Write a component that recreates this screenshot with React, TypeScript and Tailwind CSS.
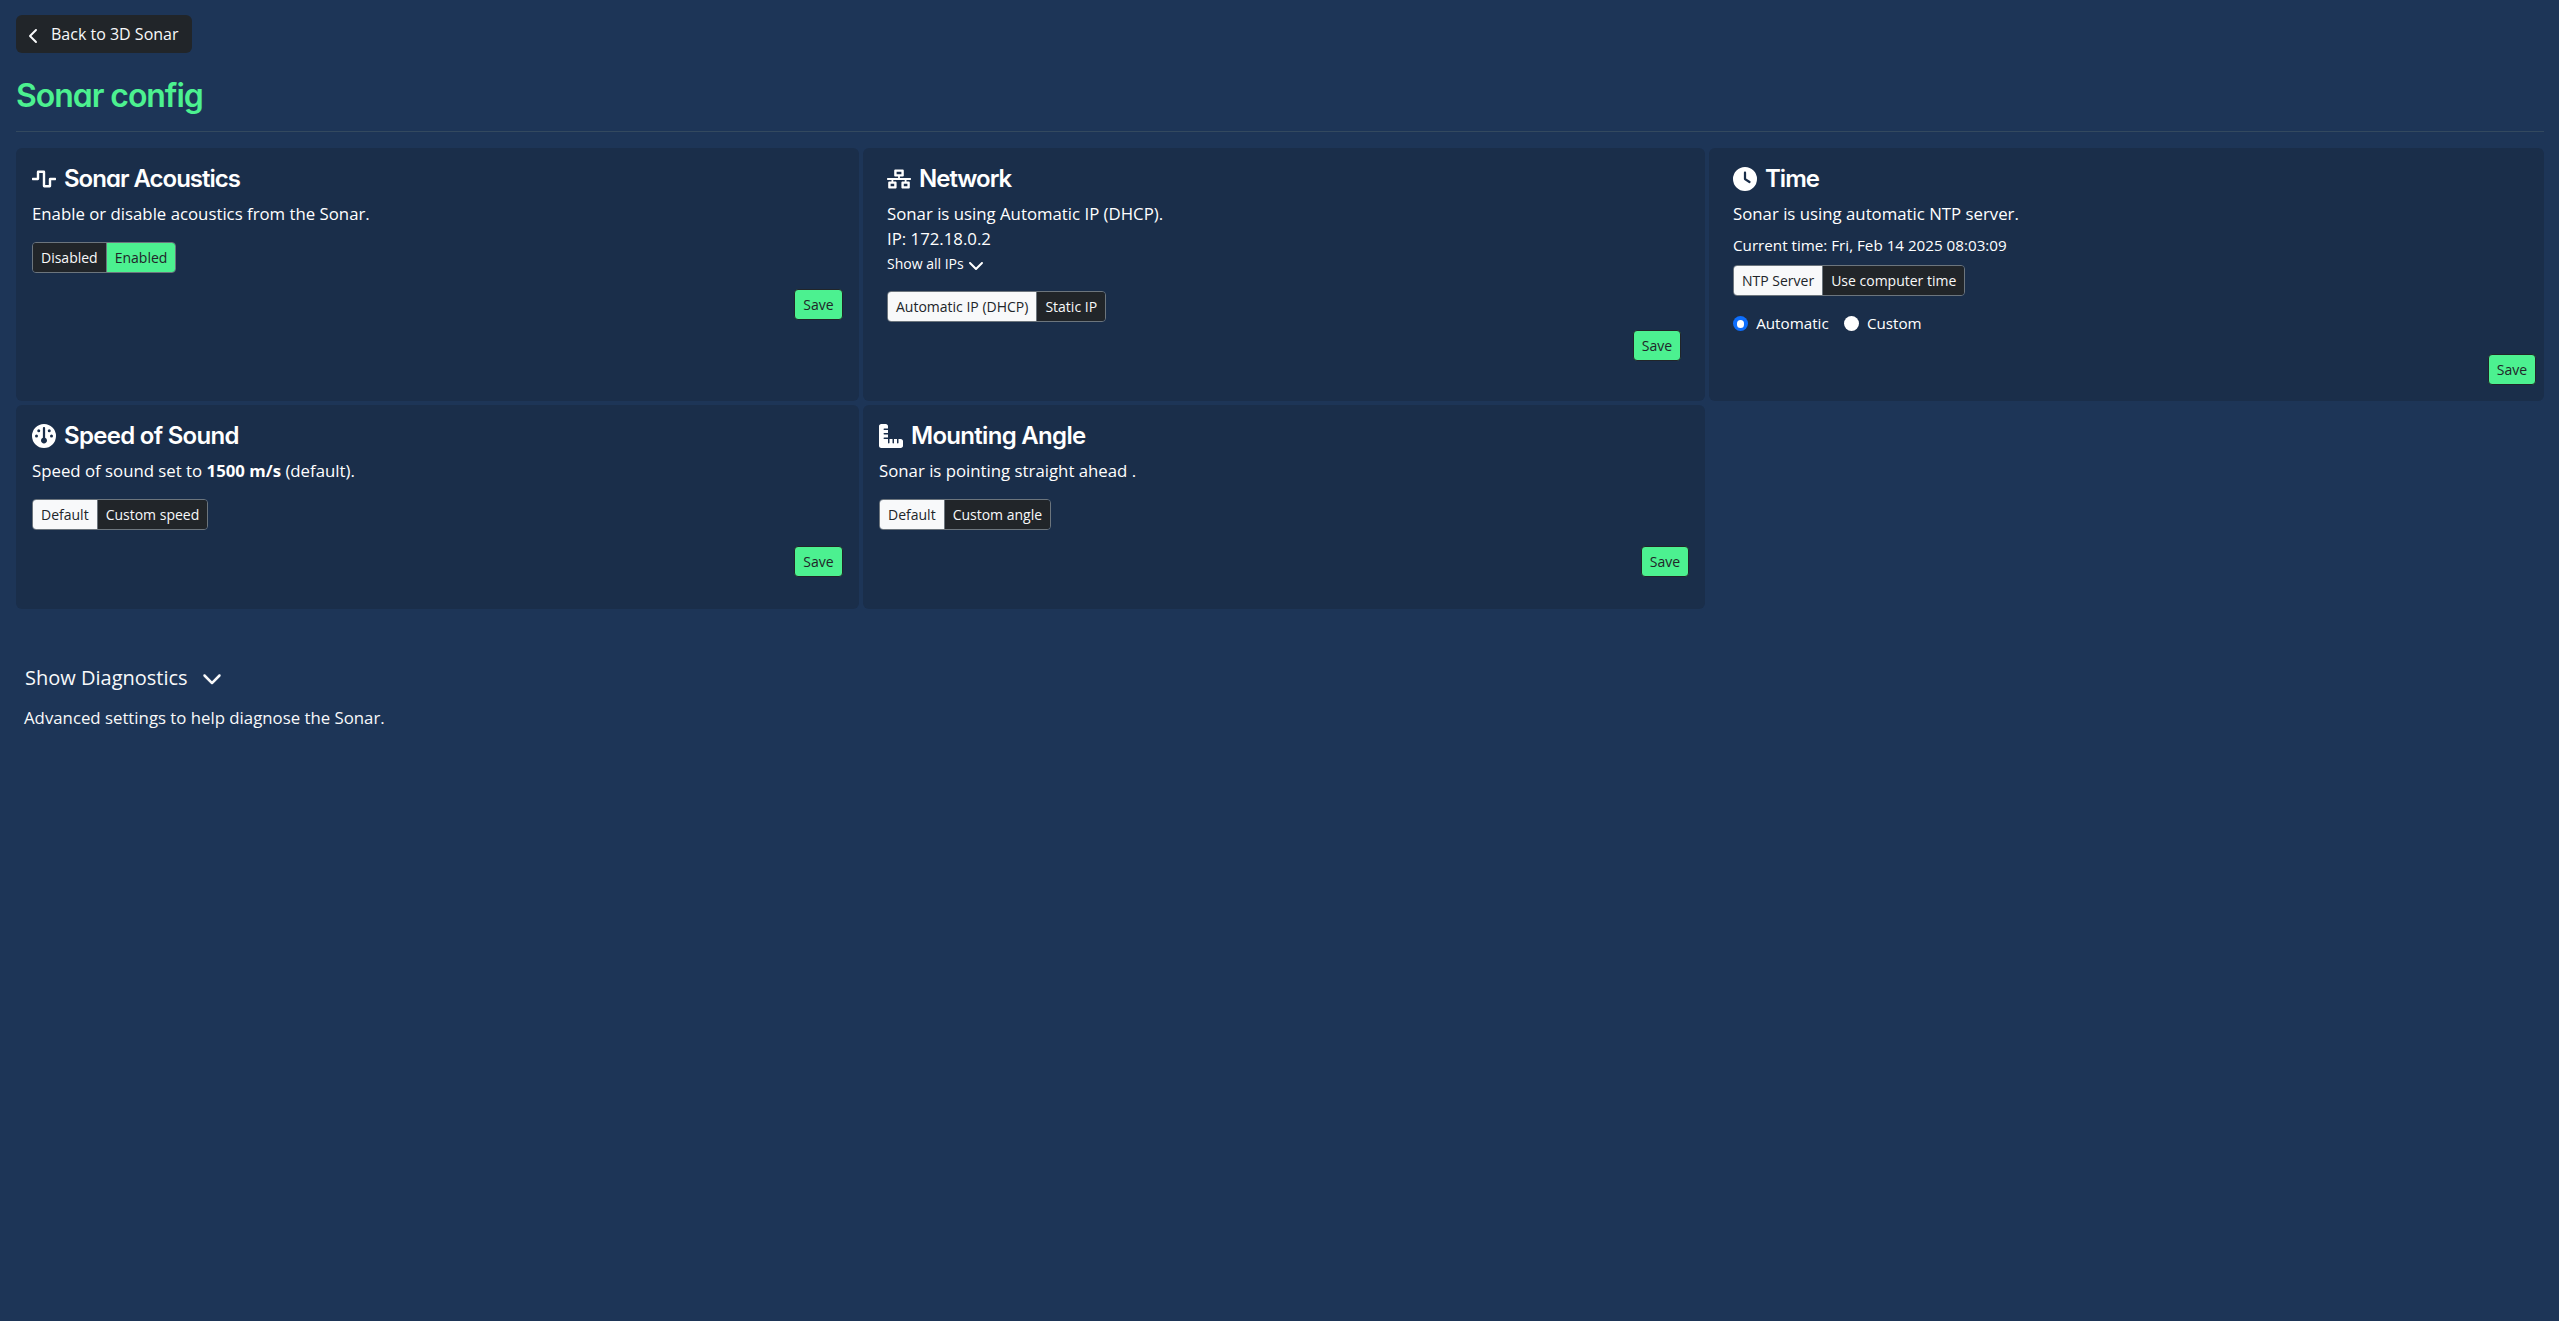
import React, { type ReactNode } from "react";
import { FaNetworkWired, FaWaveSquare } from "react-icons/fa";
import { FaChevronDown, FaChevronLeft, FaClock, FaGauge, FaRulerCombined } from "react-icons/fa6";

type CardProps = {
  icon: ReactNode;
  title: string;
  tracking?: string;
  className: string;
  children: ReactNode;
};

function Card({ icon, title, tracking = "tracking-[-1px]", className, children }: CardProps) {
  return (
    <section className={`flex flex-col items-start rounded-md bg-[#1a2e4a] pt-4 ${className}`}>
      <h2
        className={`mb-2 flex h-[29px] items-center gap-2 font-[Inter,sans-serif] text-2xl leading-[29px] font-semibold [font-feature-settings:'cv11'] ${tracking}`}
      >
        {icon}
        {title}
      </h2>
      {children}
    </section>
  );
}

type ToggleProps = { options: [string, string]; active: number; accent?: boolean };

function Toggle({ options, active, accent = false }: ToggleProps) {
  const on = accent ? "bg-[#4cf190] text-[#212529]" : "bg-[#f8f9fa] text-[#212529]";
  const off = "bg-[#212529] text-[#f8f9fa]";
  return (
    <div className="flex h-[31px] overflow-hidden rounded border border-[#6c757d] text-sm leading-[21px]">
      {options.map((label, i) => (
        <button
          key={label}
          className={`px-2 py-1 whitespace-nowrap ${i === 1 ? "border-l border-[#6c757d]" : ""} ${i === active ? on : off}`}
        >
          {label}
        </button>
      ))}
    </div>
  );
}

function Save({ className }: { className: string }) {
  return (
    <button
      className={`h-[31px] self-end rounded border border-[#212529] bg-[#4cf190] text-sm leading-[21px] text-[#212529] ${className}`}
    >
      Save
    </button>
  );
}

function Radio({ label, checked }: { label: string; checked: boolean }) {
  return (
    <label className="flex items-center gap-2">
      <span
        className={`flex size-[15.2px] items-center justify-center rounded-full ${checked ? "bg-[#0d6efd]" : "bg-white"}`}
      >
        {checked && <span className="size-[7.6px] rounded-full bg-white" />}
      </span>
      {label}
    </label>
  );
}

export default function App() {
  return (
    <main className="min-h-screen bg-[#1d3557] px-4 pt-[15px] pr-[15px] font-['Open_Sans',sans-serif] text-[16.8px] leading-[25.2px] text-[#f8f9fa]">
      <button className="flex h-[38px] w-44 items-center rounded-md bg-[#212529] pl-[10px] text-base leading-6">
        <FaChevronLeft className="mt-[3px] mr-[9px] size-4" />
        Back to 3D Sonar
      </button>

      <h1 className="mt-6 font-[Inter,sans-serif] text-[32px] leading-[38px] font-semibold tracking-[-1.05px] text-[#4cf190] [font-feature-settings:'cv11']">
        Sonar config
      </h1>
      <hr className="mt-4 mb-4 border-[#33495f]" />

      <div className="grid grid-cols-[843px_842px_835px] grid-rows-[253px_204px] gap-1 text-white">
        <Card icon={<FaWaveSquare />} title="Sonar Acoustics" className="px-4">
          <p>Enable or disable acoustics from the Sonar.</p>
          <div className="mt-4">
            <Toggle options={["Disabled", "Enabled"]} active={1} accent />
          </div>
          <Save className="mt-4 w-[49px]" />
        </Card>

        <Card icon={<FaNetworkWired />} title="Network" className="px-6">
          <p>Sonar is using Automatic IP (DHCP).</p>
          <p>IP: 172.18.0.2</p>
          <button className="flex h-6 items-center gap-1 pt-[2px] text-sm">
            Show all IPs
            <FaChevronDown className="mt-0.5 size-4" />
          </button>
          <div className="mt-4">
            <Toggle options={["Automatic IP (DHCP)", "Static IP"]} active={0} />
          </div>
          <Save className="mt-2 w-12" />
        </Card>

        <Card icon={<FaClock />} title="Time" className="pr-2 pl-6">
          <p>Sonar is using automatic NTP server.</p>
          <p className="mt-2 text-[15.2px] leading-[23px]">Current time: Fri, Feb 14 2025 08:03:09</p>
          <div className="mt-2">
            <Toggle options={["NTP Server", "Use computer time"]} active={0} />
          </div>
          <div className="mt-4 flex gap-[15px] text-[15.2px] leading-[23px]">
            <Radio label="Automatic" checked />
            <Radio label="Custom" checked={false} />
          </div>
          <Save className="mt-[19px] w-12" />
        </Card>

        <Card icon={<FaGauge />} title="Speed of Sound" tracking="tracking-[-0.7px]" className="px-4">
          <p>
            Speed of sound set to <b>1500 m/s</b> (default).
          </p>
          <div className="mt-4">
            <Toggle options={["Default", "Custom speed"]} active={0} />
          </div>
          <Save className="mt-4 w-[49px]" />
        </Card>

        <Card icon={<FaRulerCombined />} title="Mounting Angle" tracking="tracking-[-0.7px]" className="px-4">
          <p>Sonar is pointing straight ahead .</p>
          <div className="mt-4">
            <Toggle options={["Default", "Custom angle"]} active={0} />
          </div>
          <Save className="mt-4 w-12" />
        </Card>
      </div>

      <button className="mt-[54px] ml-[9px] flex h-[30px] items-center gap-[14px] text-xl">
        Show Diagnostics
        <FaChevronDown className="size-5" />
      </button>
      <p className="mt-[12px] ml-2">Advanced settings to help diagnose the Sonar.</p>
    </main>
  );
}
